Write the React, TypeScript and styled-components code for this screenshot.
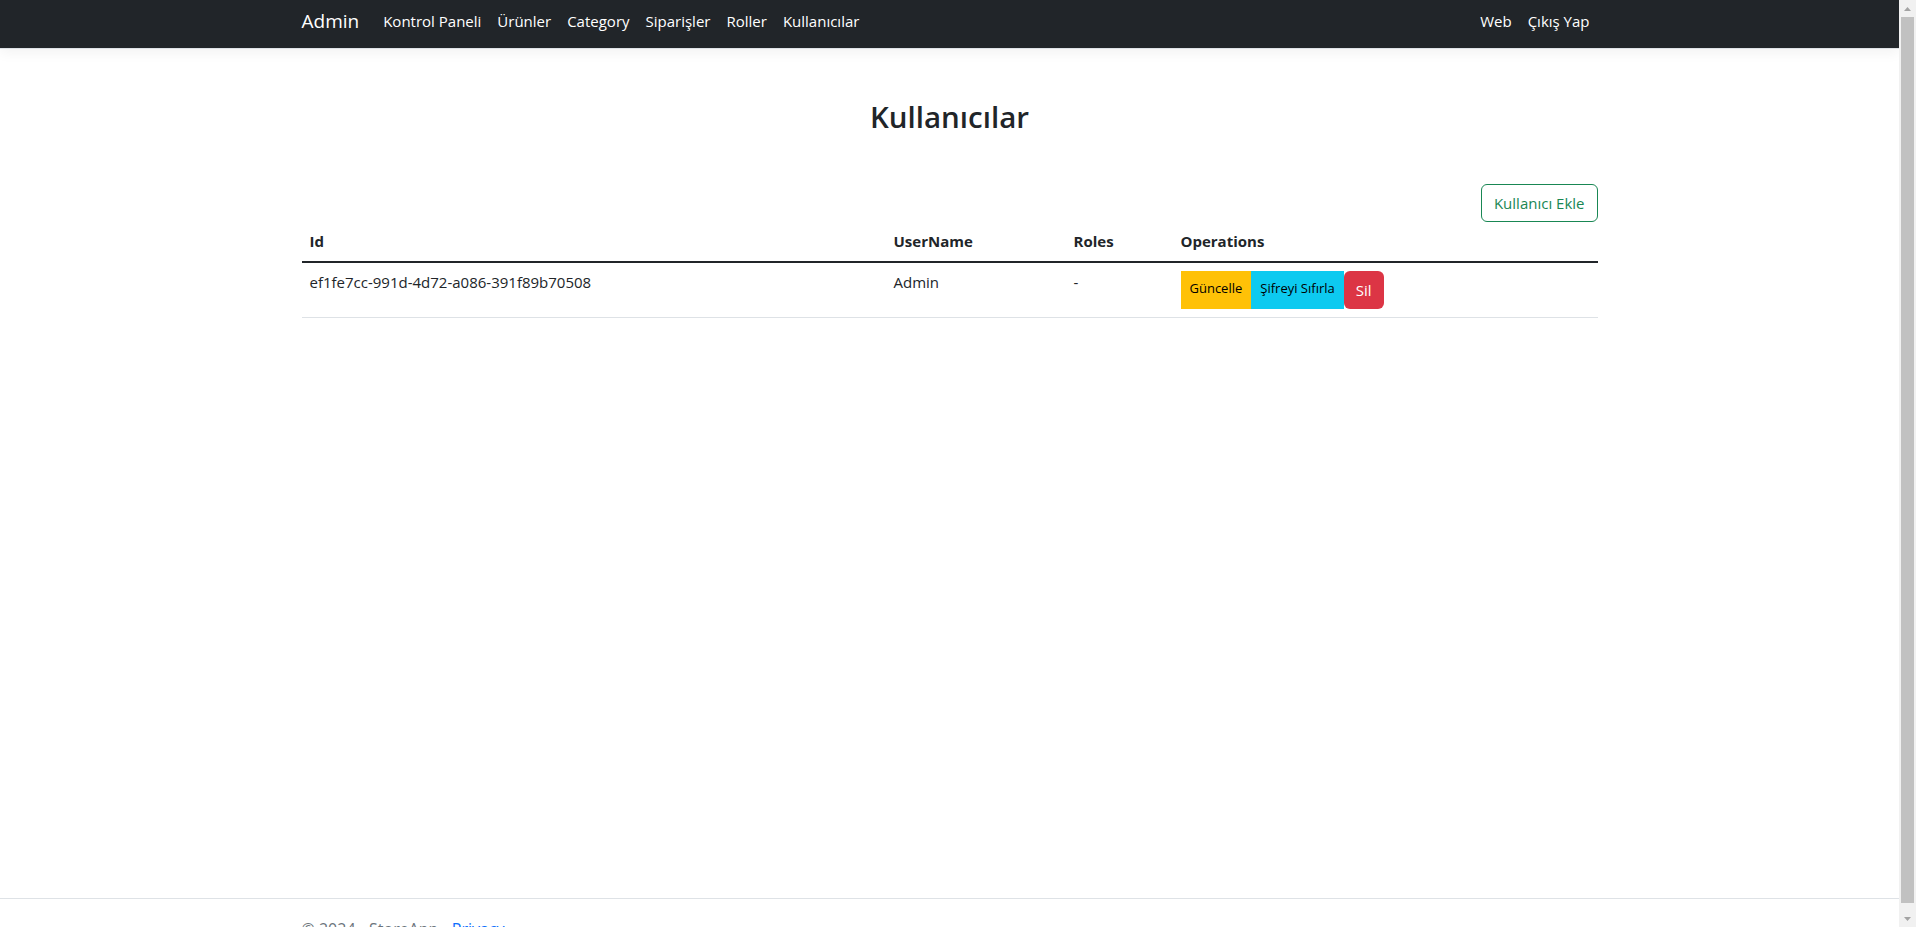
import styled, { createGlobalStyle } from 'styled-components';

const GlobalStyle = createGlobalStyle`
  *, *::before, *::after {
    box-sizing: border-box;
  }
  html, body {
    margin: 0;
    padding: 0;
    height: 100%;
    overflow: hidden;
  }
  body {
    font-family: 'Open Sans', 'Noto Sans', sans-serif;
    font-size: 16px;
    line-height: 1.5;
    color: #212529;
    background-color: #fff;
  }
`;

/* browser window: page viewport + the classic scrollbar beside it */
const Frame = styled.div`
  display: flex;
  height: 100vh;
`;

const Viewport = styled.div`
  flex: 1;
  min-width: 0;
  overflow: hidden;
`;

const ScrollTrack = styled.div`
  width: 17px;
  flex: none;
  display: flex;
  flex-direction: column;
  background-color: #f1f1f1;
`;

const ScrollButton = styled.div`
  height: 17px;
  flex: none;
  display: flex;
  align-items: center;
  justify-content: center;
`;

const ScrollThumb = styled.div`
  flex: 1;
  margin: 0 2px 7px;
  background-color: #c1c1c1;
`;

const Page = styled.div`
  display: flex;
  flex-direction: column;
  min-height: calc(100vh + 32px);
`;

const Container = styled.div`
  width: 100%;
  max-width: 1320px;
  margin: 0 auto;
  padding: 0 12px;
`;

const Navbar = styled.nav`
  height: 49px;
  background-color: #212529;
  border-bottom: 1px solid #dee2e6;
  box-shadow: 0 0.25rem 0.75rem rgba(0, 0, 0, 0.05);
  margin-bottom: 16px;
`;

const NavInner = styled(Container)`
  display: flex;
  align-items: center;
  height: 100%;
  padding-bottom: 6px;
`;

const Brand = styled.a`
  font-size: 19px;
  color: #fff;
  text-decoration: none;
  margin-right: 16px;
`;

const NavList = styled.ul<{ $end?: boolean }>`
  display: flex;
  list-style: none;
  margin: 0;
  padding: 0;
  margin-left: ${(p) => (p.$end ? 'auto' : '0')};
`;

const NavLink = styled.a`
  display: block;
  padding: 0 8px;
  color: #fff;
  font-size: 15px;
  text-decoration: none;
`;

const Main = styled.main`
  flex: 1;
`;

const Title = styled.h2`
  margin: 34px 0 50px;
  text-align: center;
  font-size: 29.5px;
  font-weight: 600;
  line-height: 1.2;
`;

const Toolbar = styled.div`
  display: flex;
  justify-content: flex-end;
`;

const OutlineButton = styled.a`
  display: inline-block;
  padding: 6px 12px;
  font-size: 15px;
  line-height: 24px;
  color: #198754;
  border: 1px solid #198754;
  border-radius: 6px;
  text-decoration: none;
`;

const Table = styled.table`
  width: 100%;
  border-collapse: collapse;
  table-layout: fixed;
  vertical-align: top;
  margin-bottom: 16px;
`;

const Th = styled.th<{ $width?: number }>`
  width: ${(p) => (p.$width ? `${p.$width}px` : 'auto')};
  padding: 8px;
  text-align: left;
  font-weight: 700;
  font-size: 15px;
  border-bottom: 2px solid #212529;
`;

const Td = styled.td`
  padding: 8px;
  font-size: 15px;
  border-bottom: 1px solid #dee2e6;
  vertical-align: top;
`;

const Actions = styled.div`
  display: flex;
`;

const ActionButton = styled.a<{ $bg: string; $fg: string; $rounded?: boolean; $big?: boolean }>`
  display: flex;
  align-items: center;
  height: 38px;
  padding: ${(p) => (p.$big ? '0 12px' : '0 9px 3px')};
  font-size: ${(p) => (p.$big ? '15px' : '13px')};
  background-color: ${(p) => p.$bg};
  color: ${(p) => p.$fg};
  border-radius: ${(p) => (p.$rounded ? '6px' : '0')};
  text-decoration: none;
  white-space: nowrap;
`;

const Footer = styled.footer`
  border-top: 1px solid #dee2e6;
  line-height: 60px;
  color: #6c757d;
  white-space: nowrap;
`;

const FooterLink = styled.a`
  color: #0d6efd;
  text-decoration: underline;
`;

const users = [
  { id: 'ef1fe7cc-991d-4d72-a086-391f89b70508', userName: 'Admin', roles: '-' },
];

const menu = ['Kontrol Paneli', 'Ürünler', 'Category', 'Siparişler', 'Roller', 'Kullanıcılar'];

const Arrow = ({ down }: { down?: boolean }) => (
  <svg width="7" height="4" viewBox="0 0 7 4">
    <path d={down ? 'M0 0h7L3.5 4z' : 'M3.5 0L7 4H0z'} fill="#a3a3a3" />
  </svg>
);

export default function App() {
  return (
    <>
      <GlobalStyle />
      <Frame>
        <Viewport>
          <Page>
            <Navbar>
              <NavInner>
                <Brand href="#">Admin</Brand>
                <NavList>
                  {menu.map((t) => (
                    <li key={t}>
                      <NavLink href="#">{t}</NavLink>
                    </li>
                  ))}
                </NavList>
                <NavList $end>
                  <li>
                    <NavLink href="#">Web</NavLink>
                  </li>
                  <li>
                    <NavLink href="#">Çıkış Yap</NavLink>
                  </li>
                </NavList>
              </NavInner>
            </Navbar>

            <Main>
              <Container>
                <Title>Kullanıcılar</Title>
                <Toolbar>
                  <OutlineButton href="#">Kullanıcı Ekle</OutlineButton>
                </Toolbar>
                <Table>
                  <thead>
                    <tr>
                      <Th $width={584}>Id</Th>
                      <Th $width={180}>UserName</Th>
                      <Th $width={107}>Roles</Th>
                      <Th>Operations</Th>
                    </tr>
                  </thead>
                  <tbody>
                    {users.map((u) => (
                      <tr key={u.id}>
                        <Td>{u.id}</Td>
                        <Td>{u.userName}</Td>
                        <Td>{u.roles}</Td>
                        <Td>
                          <Actions>
                            <ActionButton href="#" $bg="#ffc107" $fg="#000">
                              Güncelle
                            </ActionButton>
                            <ActionButton href="#" $bg="#0dcaf0" $fg="#000">
                              Şifreyi Sıfırla
                            </ActionButton>
                            <ActionButton href="#" $bg="#dc3545" $fg="#fff" $rounded $big>
                              Sil
                            </ActionButton>
                          </Actions>
                        </Td>
                      </tr>
                    ))}
                  </tbody>
                </Table>
              </Container>
            </Main>

            <Footer>
              <Container>
                © 2024 - StoreApp - <FooterLink href="#">Privacy</FooterLink>
              </Container>
            </Footer>
          </Page>
        </Viewport>
        <ScrollTrack>
          <ScrollButton>
            <Arrow />
          </ScrollButton>
          <ScrollThumb />
          <ScrollButton>
            <Arrow down />
          </ScrollButton>
        </ScrollTrack>
      </Frame>
    </>
  );
}
